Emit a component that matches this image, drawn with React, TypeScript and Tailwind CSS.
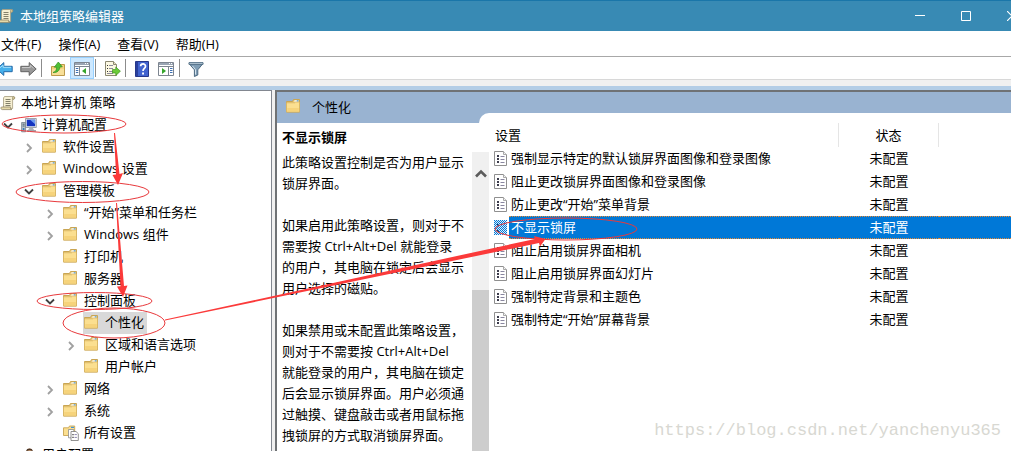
import React from "react";

type IconName = "scroll" | "computer" | "folder" | "settings" | "user";

interface TreeNode {
  label: string;
  level: 0 | 1 | 2 | 3 | 4;
  icon: IconName;
  state?: "open" | "closed";
  selected?: boolean;
}

const TREE: TreeNode[] = [
  { label: "本地计算机 策略", level: 0, icon: "scroll" },
  { label: "计算机配置", level: 1, icon: "computer", state: "open" },
  { label: "软件设置", level: 2, icon: "folder", state: "closed" },
  { label: "Windows 设置", level: 2, icon: "folder", state: "closed" },
  { label: "管理模板", level: 2, icon: "folder", state: "open" },
  { label: "“开始”菜单和任务栏", level: 3, icon: "folder", state: "closed" },
  { label: "Windows 组件", level: 3, icon: "folder", state: "closed" },
  { label: "打印机", level: 3, icon: "folder" },
  { label: "服务器", level: 3, icon: "folder" },
  { label: "控制面板", level: 3, icon: "folder", state: "open" },
  { label: "个性化", level: 4, icon: "folder", selected: true },
  { label: "区域和语言选项", level: 4, icon: "folder", state: "closed" },
  { label: "用户帐户", level: 4, icon: "folder" },
  { label: "网络", level: 3, icon: "folder", state: "closed" },
  { label: "系统", level: 3, icon: "folder", state: "closed" },
  { label: "所有设置", level: 3, icon: "settings" },
  { label: "用户配置", level: 1, icon: "user", state: "open" },
];

const INDENT = ["pl-0", "pl-0", "pl-[21px]", "pl-[42px]", "pl-[63px]"];

const POLICIES = [
  "强制显示特定的默认锁屏界面图像和登录图像",
  "阻止更改锁屏界面图像和登录图像",
  "防止更改“开始”菜单背景",
  "不显示锁屏",
  "阻止启用锁屏界面相机",
  "阻止启用锁屏界面幻灯片",
  "强制特定背景和主题色",
  "强制特定“开始”屏幕背景",
];
const SELECTED = 3;

const DESCRIPTION = `此策略设置控制是否为用户显示
锁屏界面。

如果启用此策略设置，则对于不
需要按 Ctrl+Alt+Del 就能登录
的用户，其电脑在锁定后会显示
用户选择的磁贴。

如果禁用或未配置此策略设置，
则对于不需要按 Ctrl+Alt+Del
就能登录的用户，其电脑在锁定
后会显示锁屏界面。用户必须通
过触摸、键盘敲击或者用鼠标拖
拽锁屏的方式取消锁屏界面。`;

const ScrollIcon = () => (
  <svg width="16" height="16" viewBox="0 0 16 16" className="shrink-0">
    <path d="M4.5 1.5h9.3c1.2 0 1.4 2.6 0 2.8h-1.2v9.2H3.5V3z" fill="#f6efd2" stroke="#a59b7c" strokeWidth=".8" />
    <path d="M12.6 4.3V2.4c.2-1 2-.9 2 .5 0 1-.8 1.4-2 1.4z" fill="#e2d3a0" stroke="#8f8667" strokeWidth=".7" />
    <path d="M1.4 12h9.4c-.6 1 0 2.6 1 2.6H2.4c-1.6 0-1.8-2-1-2.6z" fill="#e6d9a8" stroke="#8f8667" strokeWidth=".8" />
    <path d="M5.5 4.5h5M5.5 6.5h5M5.5 8.5h5M5.5 10.5h5" stroke="#77745f" strokeWidth=".9" />
  </svg>
);

const FolderIcon = () => (
  <svg width="16" height="16" viewBox="1 1 16 16" className="shrink-0">
    <path d="M1.5 3.5h6l1-2h6v12.5h-13z" fill="#e9c97a" stroke="#c9a553" strokeWidth="1" />
    <path d="M9.5 2.3h4v1.6h-4z" fill="#f8fbfd" />
    <path d="M11.8 2.3h1.7v1.2h-1.7z" fill="#3f95dc" />
    <path d="M1.5 4.8h8l1-.8h4v10h-13z" fill="#fbdf90" stroke="#d6b262" strokeWidth=".7" />
    <path d="M2.3 10h11.5v3.6H2.3z" fill="#f3cd72" opacity=".7" />
  </svg>
);

const ComputerIcon = () => (
  <svg width="16" height="16" viewBox="0 0 16 16" className="shrink-0">
    <path d="M4.5 1.5h10.8v9H4.5z" fill="#dfe3e6" stroke="#8b9298" strokeWidth=".8" />
    <path d="M5.8 2.7h8.3v6.5H5.8z" fill="#1534c0" />
    <path d="M9 2.7h5.1v4.6z" fill="#6f9df0" />
    <path d="M8.5 10.5h3l1.8 2.8H7z" fill="#aeb4b9" />
    <path d="M6 13.2h9v1.4H6z" fill="#8b9298" />
    <path d="M.6 5.5h4v9.3h-4z" fill="#b9c2c9" stroke="#76828c" strokeWidth=".8" />
    <path d="M1.6 7.2h2M1.6 9h2" stroke="#4d6270" />
    <circle cx="2.6" cy="12" r="1" fill="#2d72b8" />
  </svg>
);

const SettingsIcon = () => (
  <svg width="16" height="16" viewBox="0 0 16 16" className="shrink-0">
    <path d="M.5 2.8h5l1-1.8h5.2v9.5H.5z" fill="#fbdf90" stroke="#c9a553" strokeWidth=".9" />
    <path d="M8 1.8h3v1.2H8z" fill="#3f95dc" />
    <path d="M5.5 4.5h5.3v8.3H5.5z" fill="#fff" stroke="#8b8b8b" strokeWidth=".8" />
    <path d="M8 6.5h5l2.3 2.2v6.8H8z" fill="#fff" stroke="#777" strokeWidth=".8" />
    <path d="M9.4 9.6h1.2M9.4 12.4h1.2" stroke="#333" strokeWidth="1.2" />
    <path d="M11.5 9.6h2.4M11.5 12.4h2.4" stroke="#8d86ae" />
  </svg>
);

const UserIcon = () => (
  <svg width="16" height="16" viewBox="0 0 16 16" className="shrink-0">
    <circle cx="8.5" cy="4.6" r="3" fill="#d9a87c" />
    <path d="M5.2 4.4C5 .6 12 .6 11.8 4.4 10.5 3 7 3 5.2 4.4z" fill="#4a3526" />
    <path d="M2.5 15c0-8 12-8 12 0z" fill="#3f78bd" />
  </svg>
);

const PolicyIcon = () => (
  <svg width="14" height="15" viewBox="0 0 14 15" className="block">
    <path d="M.5.5h9l3 3v11H.5z" fill="#fff" stroke="#8f8f8f" />
    <path d="M9.5.5v3h3" fill="#f3f3f3" stroke="#a8a8a8" />
    <path d="M3 4h2v2H3zM3 7h2v2H3zM3 10h2v2H3z" fill="#3c3c4c" />
    <path d="M6.5 5.5h4M6.5 8.5h4M6.5 11.5h4" stroke="#8a87a0" />
  </svg>
);

const SelectedPolicyIcon = () => (
  <svg width="14" height="15" viewBox="0 0 14 15" className="block">
    <defs>
      <pattern id="dither" width="2" height="2" patternUnits="userSpaceOnUse">
        <path d="M0 0h1v1H0zM1 1h1v1H1z" fill="#0078d7" />
      </pattern>
    </defs>
    <path d="M0 0h10l3 3v12H0z" fill="#dfeefa" />
    <path d="M3 4h2v2H3zM3 10h2v2H3z" fill="#24364c" />
    <path d="M0 0h13v15H0z" fill="url(#dither)" />
  </svg>
);

const NODE_ICONS: Record<IconName, () => React.JSX.Element> = {
  scroll: ScrollIcon,
  computer: ComputerIcon,
  folder: FolderIcon,
  settings: SettingsIcon,
  user: UserIcon,
};

const ArrowIcon = ({ back }: { back?: boolean }) => (
  <svg width="17" height="16" viewBox="0 0 17 16" className="shrink-0">
    {back ? (
      <path d="M.8 8l7-6.4v3.7h8.4v5.4H7.8v3.7z" fill="#45b0ec" stroke="#2469a8" />
    ) : (
      <path d="M16.2 8l-7-6.4v3.7H.8v5.4h8.4v3.7z" fill="#989898" stroke="#636363" />
    )}
    <path d={back ? "M3.5 7.2l3.6-3v2.1h8" : "M2 6.5h8.3V4.2l3.3 3"} fill="none" stroke={back ? "#a6e0fb" : "#c8c8c8"} />
  </svg>
);

const UpFolderIcon = () => (
  <svg width="16" height="16" viewBox="0 0 16 16">
    <path d="M1.5 5.5h6l1.5-2h5.500v11h-13z" fill="#f3d37c" stroke="#bd9a4b" />
    <path d="M2 8h12v6H2z" fill="#f8df98" />
    <path d="M3 11.500c2.600-.9 3.700-2.600 3.700-5.300H4.300L8.300 1l4 4.800-2.500.2C9.800 9.500 7 12 3 11.500z" fill="#4fc034" stroke="#2e8e1f" strokeWidth=".7" />
  </svg>
);

const PanelIcon = ({ right }: { right?: boolean }) => (
  <svg width="16" height="14" viewBox="0 0 16 14">
    <path d="M.5.5h15v13H.5z" fill="#fff" stroke="#7d8590" />
    <path d="M1 1h14v2H1z" fill="#9aa5b3" />
    <path d="M11 1.500h1M13 1.500h1" stroke="#fff" />
    <path d="M1 4.500h14" stroke="#7d8590" />
    {right ? (
      <>
        <path d="M10.500 5v8.500" stroke="#7d8590" />
        <path d="M12 6.500h2.500M12 8.500h2.500M12 10.500h2.500" stroke="#3d6fb2" />
        <path d="M4 6l4 3-4 3z" fill="#35a52b" />
      </>
    ) : (
      <>
        <path d="M5.500 5v8.500" stroke="#7d8590" />
        <path d="M1.800 6.500h2.500M1.800 8.500h2.500M1.800 10.500h2.500" stroke="#3d6fb2" />
        <path d="M12 6L8 9l4 3z" fill="#35a52b" />
      </>
    )}
  </svg>
);

const ExportIcon = () => (
  <svg width="17" height="16" viewBox="0 0 17 16">
    <path d="M1.500.5h8l3 3v11h-11z" fill="#fdf9e3" stroke="#8c8872" />
    <path d="M9.500.5v3h3" fill="#e8e1bd" stroke="#8c8872" />
    <path d="M3 4.500h1M3 7.500h1M3 10.500h1" stroke="#333" />
    <path d="M5 4.500h4M5 7.500h4M5 10.500h4M3 12.500h6" stroke="#8d8b9c" />
    <path d="M8.500 8.500h3.300V6l4.600 4.200-4.600 4.300V12H8.500z" fill="#6ccb39" stroke="#3f9520" strokeWidth=".7" />
  </svg>
);

const HelpIcon = () => (
  <svg width="14" height="16" viewBox="0 0 14 16">
    <path d="M.5.5h13v15H.5z" fill="#4163cf" stroke="#26378a" />
    <path d="M1 1h2v14H1z" fill="#2a409d" />
    <path d="M5.600 5.300c.1-3.200 5-3 4.900-.1C10.500 7.400 8 7.200 8 10" fill="none" stroke="#fff" strokeWidth="1.700" />
    <path d="M7.100 11.500h1.900v1.900H7.100z" fill="#fff" />
  </svg>
);

const FilterIcon = () => (
  <svg width="16" height="16" viewBox="0 0 16 16">
    <path d="M1 2.500h14L9.800 8.800V14l-3.400 1.500V8.800z" fill="#7f9db5" stroke="#4d6a82" />
    <path d="M1 1.500h14v2H1z" fill="#a9bdcc" stroke="#4d6a82" strokeWidth=".8" />
    <path d="M4.500 5l3 3.600v5" fill="none" stroke="#d6e4ee" />
  </svg>
);

const Expander = ({ state }: { state?: "open" | "closed" }) => {
  if (!state) return <span className="w-4 shrink-0" />;
  return (
    <button type="button" aria-label={state === "open" ? "折叠" : "展开"} className="flex w-4 shrink-0 justify-center">
      <svg width="10" height="10" viewBox="0 0 10 10" className="mt-0.5">
        <path
          d={state === "open" ? "M1 2.500l4 4 4-4" : "M3 1l4 4-4 4"}
          fill="none"
          stroke={state === "open" ? "#404040" : "#a0a0a0"}
          strokeWidth="1.800"
        />
      </svg>
    </button>
  );
};

const ToolButton = ({ label, active, children }: { label: string; active?: boolean; children: React.ReactNode }) => (
  <button
    type="button"
    aria-label={label}
    className={`flex h-[22px] w-6 shrink-0 items-center justify-center border pt-0.5 ${
      active ? "border-[#99d1ff] bg-[#cce8ff]" : "border-transparent"
    }`}
  >
    {children}
  </button>
);

const Separator = () => <span className="mr-1 ml-px h-[18px] w-px shrink-0 bg-[#8c8c8c]" />;

const TreeRow = ({ node }: { node: TreeNode }) => {
  const Icon = NODE_ICONS[node.icon];
  return (
    <li className={`flex h-[22px] items-center ${INDENT[node.level]}`}>
      {node.level > 0 && <Expander state={node.state} />}
      <span
        className={`flex h-[22px] items-center gap-[5px] whitespace-nowrap ${
          node.level > 0 ? "ml-1 pl-px" : ""
        } ${node.selected ? "bg-[#d9d9d9] pr-[3px]" : ""}`}
      >
        <Icon />
        {node.label}
      </span>
    </li>
  );
};

const Annotations = () => (
  <svg width="660" height="345" viewBox="0 0 660 345" className="pointer-events-none absolute top-0 left-0" aria-hidden="true">
    <g fill="none" stroke="#e8393c" strokeWidth="1">
      <ellipse cx="64" cy="124" rx="62" ry="9" />
      <ellipse cx="82.500" cy="192" rx="66.500" ry="10.500" />
      <ellipse cx="94.500" cy="301" rx="57.500" ry="8.500" />
      <ellipse cx="114" cy="323" rx="51" ry="15" />
      <ellipse cx="566" cy="229" rx="71" ry="11" />
    </g>
    <g fill="#fb3a3a">
      <path d="M114 133h1l4.500 41 3.500-1-5 12-5.500-10 3.500-.5z" />
      <path d="M116 203h1l7 83 3.500-.5-4.500 11.500-6-10.500 3.500-.3z" />
      <path d="M165 319.500l370-80.500-1-3 11.500 3-5.500 7.500-1-3.500-374 77.500z" />
    </g>
  </svg>
);

export default function App() {
  return (
    <div className="relative flex h-screen flex-col overflow-hidden bg-[#f0f0f0] font-['Open_Sans','Noto_Sans_CJK_SC',sans-serif] text-[13px] text-black">
      <header className="flex h-[31px] shrink-0 items-center border-t border-[#1a76a9] bg-[#388ab4] text-white">
        <span className="-ml-0.5">
          <ScrollIcon />
        </span>
        <h1 className="ml-1.5 flex-1 leading-5">本地组策略编辑器</h1>
        <div className="-mr-6 flex h-full">
          <button type="button" aria-label="最小化" className="flex w-[46px] items-center justify-center">
            <svg width="10" height="10" viewBox="0 0 10 10"><path d="M0 4.500h10" stroke="#fff" /></svg>
          </button>
          <button type="button" aria-label="最大化" className="flex w-[46px] items-center justify-center">
            <svg width="10" height="10" viewBox="0 0 10 10"><path d="M.5.500h9v9h-9z" fill="none" stroke="#fff" /></svg>
          </button>
          <button type="button" aria-label="关闭" className="flex w-[46px] items-center justify-center">
            <svg width="10" height="10" viewBox="0 0 10 10"><path d="M0 0l10 10M10 0L0 10" stroke="#fff" strokeWidth="1.200" /></svg>
          </button>
        </div>
      </header>

      <nav className="flex h-[26px] shrink-0 items-center gap-[17px] border-b border-[#a8a8a8] bg-white pl-px">
        {["文件(F)", "操作(A)", "查看(V)", "帮助(H)"].map((item) => (
          <button key={item} type="button" className="leading-5">
            {item}
          </button>
        ))}
      </nav>

      <div className="flex h-[23px] shrink-0 items-center border-b border-[#d8d8d8] bg-white">
        <button type="button" aria-label="后退" className="flex w-4 justify-end overflow-hidden pt-0.5 pr-[3px]">
          <ArrowIcon back />
        </button>
        <ToolButton label="前进"><ArrowIcon /></ToolButton>
        <Separator />
        <ToolButton label="向上"><UpFolderIcon /></ToolButton>
        <ToolButton label="显示/隐藏控制台树" active><PanelIcon /></ToolButton>
        <Separator />
        <ToolButton label="导出列表"><ExportIcon /></ToolButton>
        <Separator />
        <ToolButton label="帮助"><HelpIcon /></ToolButton>
        <ToolButton label="显示/隐藏操作窗格"><PanelIcon right /></ToolButton>
        <Separator />
        <ToolButton label="筛选器"><FilterIcon /></ToolButton>
      </div>

      <div className="mt-1.5 h-1 shrink-0 bg-[#b3cde6]" />

      <main className="flex min-h-0 flex-1 gap-[3px]">
        <aside className="w-[272px] shrink-0 overflow-hidden border-t border-r border-[#828790] bg-white pt-px">
          <ul>
            {TREE.map((node) => (
              <TreeRow key={node.label} node={node} />
            ))}
          </ul>
        </aside>

        <section className="flex min-w-0 flex-1 flex-col border-t-2 border-l-2 border-[#6f7275] bg-white">
          <div className="flex h-[31px] shrink-0 bg-[#99b3d1]">
            <div className="flex w-[202px] shrink-0 items-center gap-2.5 pb-0.5 pl-[9px]">
              <FolderIcon />
              <h2 className="leading-5">个性化</h2>
            </div>
            <div className="h-2.5 flex-1 self-end rounded-tl-[10px] bg-white" />
          </div>

          <div className="flex min-h-0 flex-1">
            <div className="flex w-[212px] shrink-0 flex-col">
              <h3 className="flex h-[29px] shrink-0 items-center pl-[5px] font-bold">不显示锁屏</h3>
              <div className="flex min-h-0 flex-1">
                <p className="min-w-0 flex-1 overflow-hidden pl-[5px] leading-[21px] whitespace-pre">{DESCRIPTION}</p>
                <div className="flex w-[17px] shrink-0 flex-col bg-[#f0f0f0]">
                  <button type="button" aria-label="向上滚动" className="flex h-[42px] items-center justify-center">
                    <svg width="12" height="9" viewBox="0 0 12 9"><path d="M1 7.500l5-5 5 5" fill="none" stroke="#5c5c5c" strokeWidth="2.600" /></svg>
                  </button>
                  <div className="mt-24 flex-1 bg-[#cdcdcd]" />
                </div>
              </div>
            </div>

            <div className="min-w-0 flex-1 overflow-hidden">
              <table className="w-full table-fixed border-separate border-spacing-0">
                <colgroup>
                  <col className="w-5" />
                  <col className="w-[330px]" />
                  <col className="w-[100px]" />
                  <col />
                </colgroup>
                <thead>
                  <tr className="h-6">
                    <th colSpan={2} className="border-r border-[#e5e5e5] p-0 pl-1.5 text-left leading-5 font-normal">设置</th>
                    <th className="border-r border-[#e5e5e5] p-0 text-center leading-5 font-normal">状态</th>
                    <td className="p-0" />
                  </tr>
                </thead>
                <tbody>
                  {POLICIES.map((name, i) => {
                    const cell = i === SELECTED
                      ? "border-y border-dotted border-[#e98a35] bg-[#0078d7] text-white"
                      : "border-y border-transparent";
                    return (
                      <tr key={name} className="h-[23px]">
                        <td className="p-0 pl-[5px]">{i === SELECTED ? <SelectedPolicyIcon /> : <PolicyIcon />}</td>
                        <td className={`p-0 pb-px pl-0.5 leading-5 whitespace-nowrap ${cell}`}>{name}</td>
                        <td className={`p-0 pb-px text-center leading-5 whitespace-nowrap ${cell}`}>未配置</td>
                        <td className={`p-0 ${cell}`} />
                      </tr>
                    );
                  })}
                </tbody>
              </table>
            </div>
          </div>
        </section>
      </main>

      <Annotations />
      <p className="pointer-events-none absolute right-2.5 bottom-2 font-['Liberation_Mono',monospace] text-[17px] leading-6 text-[#d8d8d2]">
        https://blog.csdn.net/yanchenyu365
      </p>
    </div>
  );
}
